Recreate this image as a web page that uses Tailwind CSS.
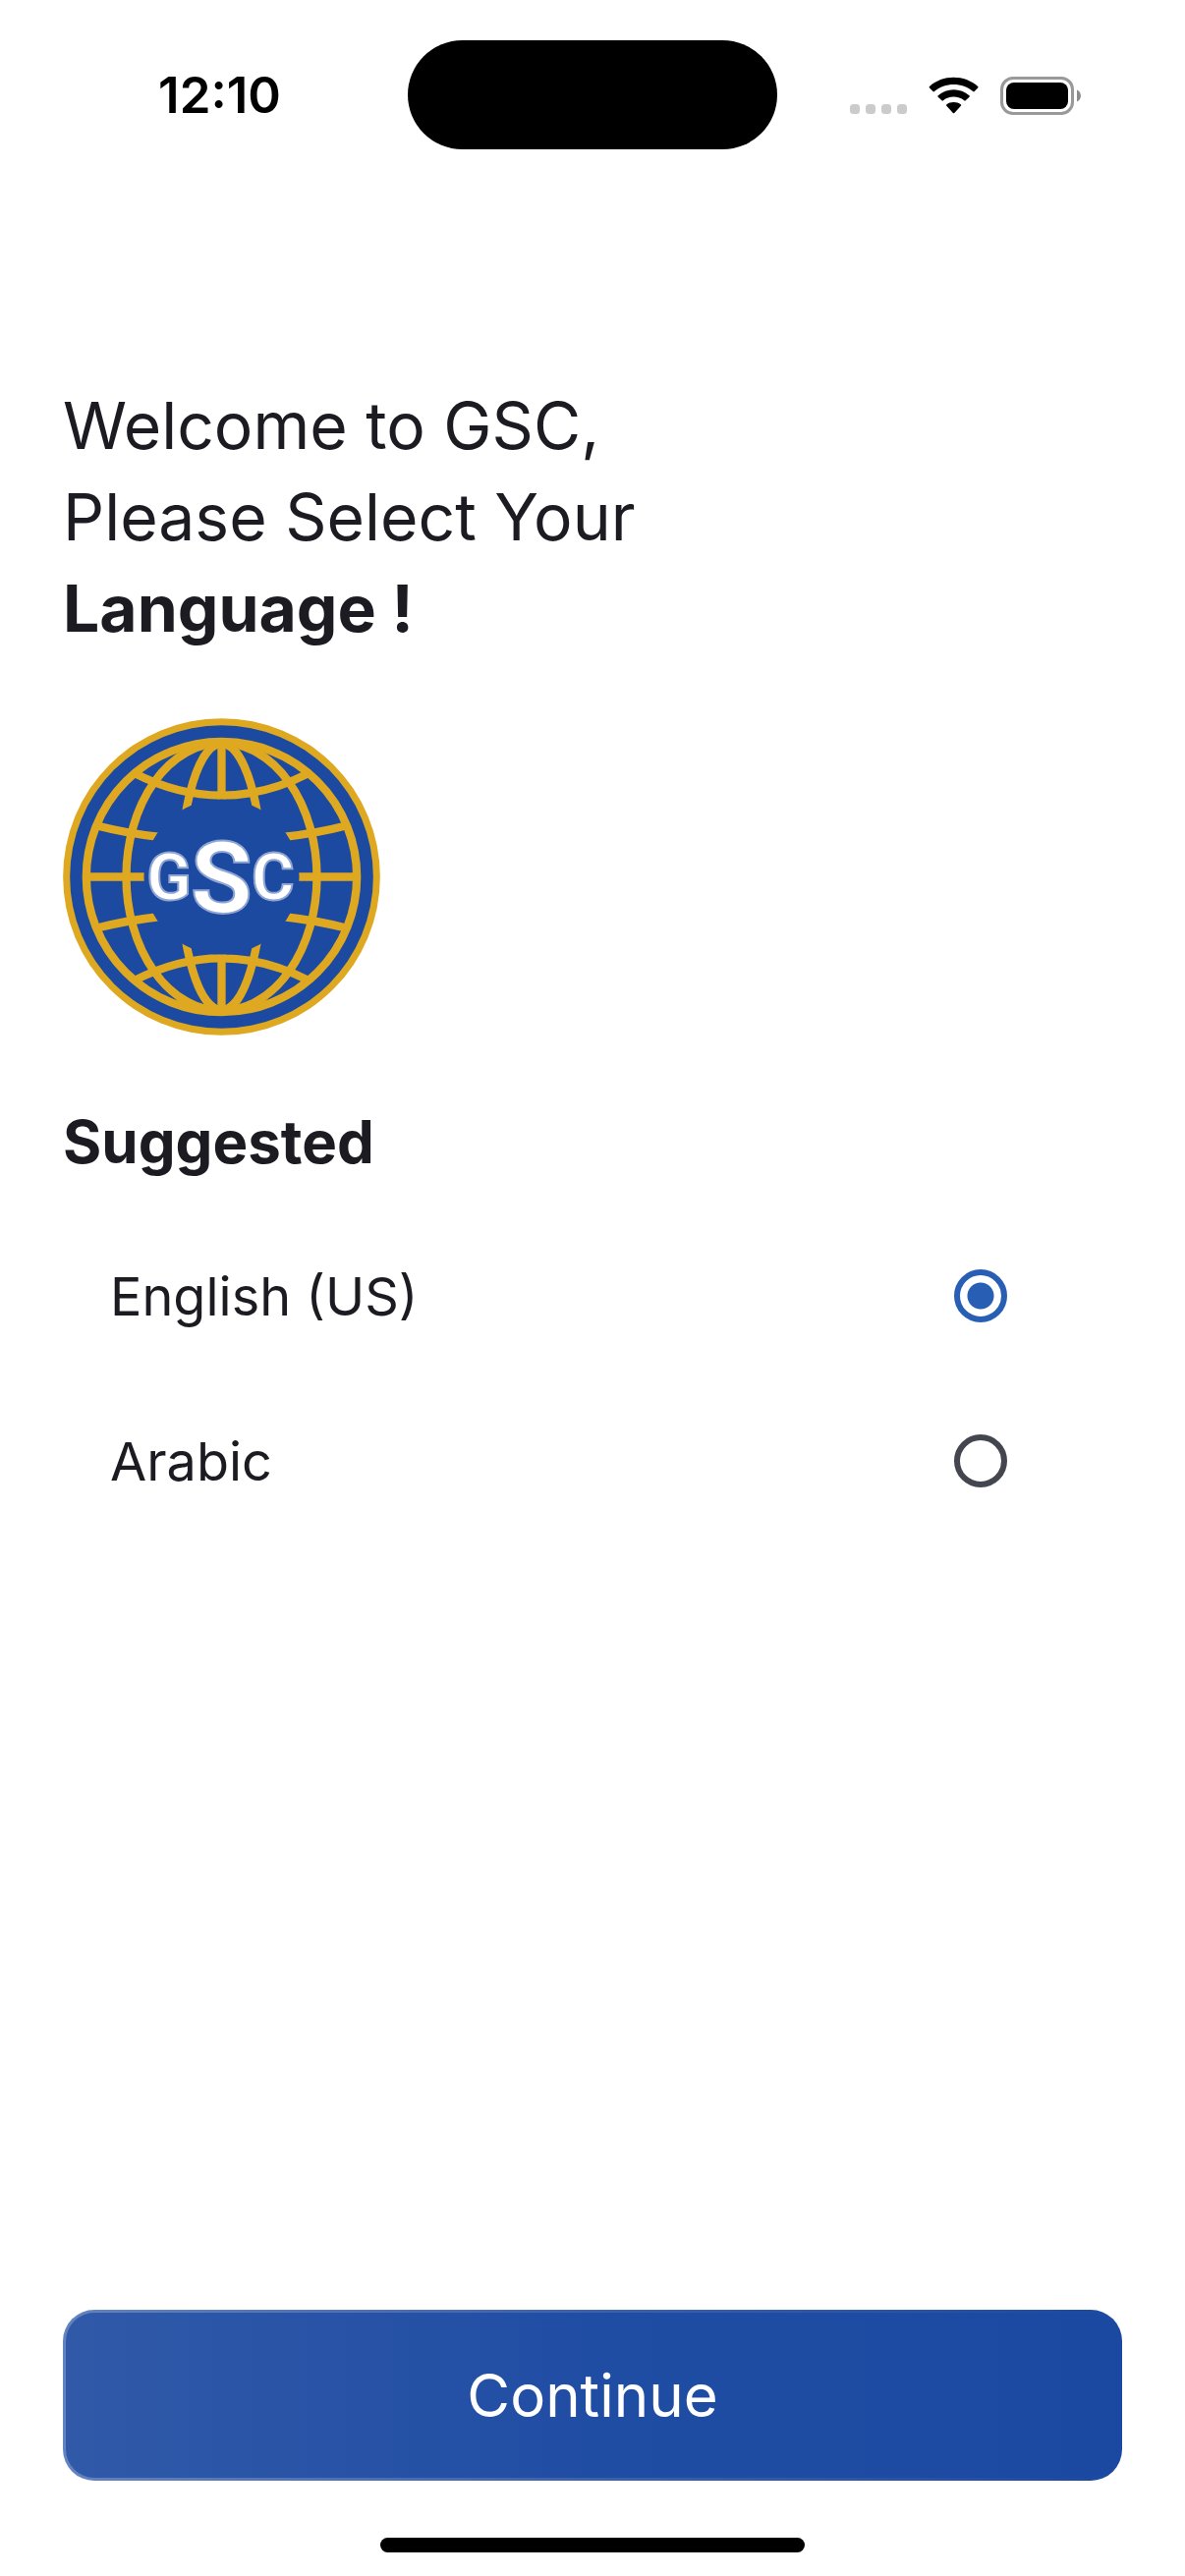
<!DOCTYPE html>
<html lang="en">
<head>
  <meta charset="UTF-8">
  <meta name="viewport" content="width=device-width, initial-scale=1.0">
  <title>GSC - Select Language</title>
  <script src="https://cdn.jsdelivr.net/npm/@tailwindcss/browser@4"></script>
</head>
<body class="bg-white text-[#1b1b21] font-['Inter','Open_Sans',sans-serif]">
  <div class="min-h-screen flex flex-col">

    <!-- Status bar -->
    <header class="grid grid-cols-[1fr_auto_1fr] items-center pt-[41px] text-black">
      <div class="flex justify-center pl-8 text-[51px] leading-none font-semibold">12:10</div>
      <div class="w-[376px] h-[111px] rounded-full bg-black"></div>
      <div class="flex justify-center items-center pr-8">
        <svg class="w-[236px] h-[40px]" viewBox="0 0 236 40" aria-hidden="true">
          <g fill="#cbcbcb">
            <rect x="0" y="29" width="10" height="10" rx="3.5"/>
            <rect x="16" y="29" width="10" height="10" rx="3.5"/>
            <rect x="32" y="29" width="10" height="10" rx="3.5"/>
            <rect x="48" y="29" width="10" height="10" rx="3.5"/>
          </g>
          <path d="M81 12.5Q80.300 11.800 81 11.100C94-1.300 117-1.300 130.200 11.100Q130.900 11.800 130.200 12.500L126.700 16.100Q126 16.800 125.300 16.100C114.500 6.500 96.700 6.500 85.900 16.100Q85.200 16.800 84.500 16.100ZM89.700 21.700Q89 21 89.700 20.300C98.300 12.200 112.900 12.200 121.500 20.300Q122.200 21 121.500 21.700L117.700 25.300Q117 26 116.300 25.300C110.300 20.300 100.900 20.300 94.900 25.300Q94.200 26 93.500 25.300ZM98.300 30.800Q97.600 30.100 98.300 29.400C102.300 26.200 108.900 26.200 112.900 29.400Q113.600 30.100 112.900 30.800L106.300 37.900Q105.600 38.600 104.900 37.900Z" fill="#000"/>
          <rect x="154.500" y="2.500" width="72" height="36" rx="11.500" fill="none" stroke="#999" stroke-width="3"/>
          <rect x="159" y="7" width="63" height="27" rx="8" fill="#000"/>
          <path d="M231 14.500C236.300 16.800 236.300 24.200 231 26.500Z" fill="#8c8c8c"/>
        </svg>
      </div>
    </header>

    <main class="flex-1 flex flex-col px-16 pt-[235px]">
      <h1 class="text-[66px] leading-[93px]">
        Welcome to GSC,<br>
        Please Select Your<br>
        <b class="font-bold">Language !</b>
      </h1>

      <svg class="mt-[65px] size-[323px]" viewBox="42 33 969 969" role="img" aria-label="GSC logo">
        <circle cx="526.500" cy="517.500" r="484" fill="#dea820"/>
        <circle cx="526.500" cy="517.500" r="463" fill="#1c4aa0"/>
        <!-- globe grid -->
        <g fill="none" stroke="#dea820" stroke-width="25">
          <circle cx="526.500" cy="517.500" r="413"/>
          <ellipse cx="526.500" cy="517.500" rx="291" ry="409"/>
          <ellipse cx="526.500" cy="517.500" rx="124" ry="407"/>
          <path d="M526.500 105V930M114 517.500H939"/>
          <path d="M258 200Q526.500 338 795 200M258 835Q526.500 697 795 835"/>
          <path d="M150 362Q235 384 340 396M903 362Q818 384 713 396M150 673Q235 651 340 639M903 673Q818 651 713 639"/>
        </g>
        <circle cx="526.500" cy="517.500" r="237" fill="#1c4aa0"/>
        <!-- monogram -->
        <g font-family="Roboto,'Liberation Sans',sans-serif" font-weight="700" fill="#fff" stroke="#8fa6d3" stroke-width="6">
          <text x="434" y="589" text-anchor="end" font-size="200">G</text>
          <text x="526" y="627" text-anchor="middle" font-size="308">S</text>
          <text x="618" y="589" font-size="200">C</text>
        </g>
      </svg>

      <form id="language-form" class="mt-[66px]">
        <fieldset>
          <legend class="mb-[31px] text-[60px] leading-[84px] font-bold">Suggested</legend>
          <label class="flex items-center justify-between h-[168px] pl-12 pr-[117px] text-[54px]">
            English (US)
            <input type="radio" name="language" value="en" checked class="appearance-none size-[54px] rounded-full border-6 border-[#44464f] checked:border-[#285fb5] checked:bg-[radial-gradient(circle,#285fb5_13px,transparent_14px)]">
          </label>
          <label class="flex items-center justify-between h-[168px] pl-12 pr-[117px] text-[54px]">
            Arabic
            <input type="radio" name="language" value="ar" class="appearance-none size-[54px] rounded-full border-6 border-[#44464f] checked:border-[#285fb5] checked:bg-[radial-gradient(circle,#285fb5_13px,transparent_14px)]">
          </label>
        </fieldset>
      </form>
    </main>

    <footer class="flex flex-col items-center px-16 pb-6">
      <button type="submit" form="language-form" class="flex w-full h-[174px] p-[3px] rounded-[32px] bg-linear-to-r from-[#6383c0] via-[#3c62ae] via-50% to-[#1b49a1] text-white text-[60px]">
        <span class="flex flex-1 h-full items-center justify-center rounded-[29px] bg-linear-to-r from-[#3059a8] via-[#204da4] via-50% to-[#1b49a1]">Continue</span>
      </button>
      <div class="mt-[58px] w-[432px] h-[15px] rounded-full bg-black"></div>
    </footer>
  </div>
</body>
</html>
